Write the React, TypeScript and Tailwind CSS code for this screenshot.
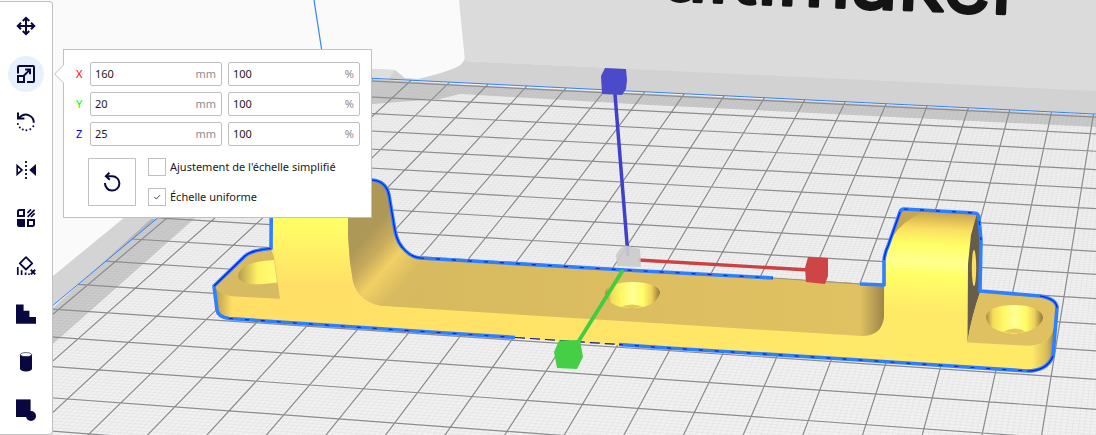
import { useState } from 'react';
import type { ReactNode } from 'react';
import { clsx } from 'clsx';

interface Tool {
  id: string;
  label: string;
  icon: ReactNode;
}

interface Axis {
  id: 'x' | 'y' | 'z';
  label: string;
  color: string;
}

const AXES: Axis[] = [
  { id: 'x', label: 'X', color: 'text-[#ff0000]' },
  { id: 'y', label: 'Y', color: 'text-[#00ff00]' },
  { id: 'z', label: 'Z', color: 'text-[#0000ff]' },
];

const TOOLS: Tool[] = [
  {
    id: 'move',
    label: 'Déplacer',
    icon: (
      <g fill="none" stroke="currentColor" strokeWidth="2">
        <path d="M10 2v16M2 10h16" />
        <path d="M6.8 5 10 1.8 13.2 5M6.8 15l3.2 3.2 3.2-3.2M5 6.8 1.8 10 5 13.2M15 6.8l3.2 3.2-3.2 3.2" />
      </g>
    ),
  },
  {
    id: 'scale',
    label: 'Mise à l’échelle',
    icon: (
      <g fill="none" stroke="currentColor" strokeWidth="2">
        <path d="M2 9.5V3a1 1 0 0 1 1-1h14a1 1 0 0 1 1 1v14a1 1 0 0 1-1 1h-6" />
        <path d="M2 12h6v6H2zM7.5 12 14 5.6M9.2 5.5H14v4.8" />
      </g>
    ),
  },
  {
    id: 'rotate',
    label: 'Tourner',
    icon: (
      <>
        <path d="M3 6.2C6 2.8 10 2 13 3.4c3 1.3 4.8 4 4.8 7.3" fill="none" stroke="currentColor" strokeWidth="2" />
        <path d="M2 .5v6h6.4" fill="none" stroke="currentColor" strokeWidth="2" />
        <g fill="currentColor">
          <circle cx="1.9" cy="12" r="1" />
          <circle cx="3.8" cy="15.4" r="1" />
          <circle cx="6.8" cy="17.4" r="1" />
          <circle cx="10.4" cy="18.3" r="1" />
          <circle cx="14.3" cy="17.3" r="1" />
          <circle cx="17.3" cy="14.2" r="1" />
        </g>
      </>
    ),
  },
  {
    id: 'mirror',
    label: 'Miroir',
    icon: (
      <>
        <path d="M1.2 5.6v8.8L6 10z" fill="none" stroke="currentColor" strokeWidth="1.7" />
        <path d="M20 4v12l-6.8-6z" fill="currentColor" />
        <path d="M10 1v18" fill="none" stroke="currentColor" strokeWidth="1.8" strokeDasharray="2 2" />
      </>
    ),
  },
  {
    id: 'mesh',
    label: 'Paramètres par modèle',
    icon: (
      <>
        <path d="M2 3.4Q2 2 3.4 2H8v6H2zM12 12h6v4.6q0 1.4-1.4 1.4H12z" fill="none" stroke="currentColor" strokeWidth="2" />
        <path d="M1 11h8v8H3q-2 0-2-2z" fill="currentColor" />
        <path d="M11.4 5 15 1.4M11.6 8.8l7-7M15 9l3.6-3.6" fill="none" stroke="currentColor" strokeWidth="1.7" />
      </>
    ),
  },
  {
    id: 'blocker',
    label: 'Bloqueur des supports',
    icon: (
      <g fill="none" stroke="currentColor">
        <path d="m10 1.2 6.2 6.1-6.2 6.2-6.2-6.2z" strokeWidth="1.8" strokeLinejoin="round" />
        <path d="M1.8 11v8M5.6 14.2V19M9.6 16.4V19M13 17.4V19" strokeWidth="1.7" />
        <path d="m14.8 13.8 4.4 4.6M19.2 13.8l-4.4 4.6" strokeWidth="2" />
      </g>
    ),
  },
  {
    id: 'stairs',
    label: 'Découpe en escalier',
    icon: <path d="M0 .4h7.6v6.3h5.8V13H20v6.7H0z" fill="currentColor" />,
  },
  {
    id: 'cylinder',
    label: 'Support cylindrique',
    icon: (
      <>
        <path d="M4 2.6v14q0 2.8 6 2.8t6-2.8v-14z" fill="currentColor" />
        <ellipse cx="10" cy="2.6" rx="5.7" ry="2" fill="#fff" stroke="currentColor" strokeWidth=".6" />
      </>
    ),
  },
  {
    id: 'shape',
    label: 'Forme personnalisée',
    icon: (
      <>
        <path d="M0-.6h14.6V17H0z" fill="currentColor" />
        <circle cx="15" cy="16" r="5" fill="currentColor" />
      </>
    ),
  },
];

// Perspective of the build plate: grid cell (i, j) to scene coordinates
function project(i: number, j: number) {
  const w = 1 - 0.002746 * i - 0.0201 * j;
  const x = (38.05 * i - 24.52 * j + 682.5) / w;
  const y = (1.72 * i + 13.46 * j + 96.5) / w;
  return `${x.toFixed(1)} ${y.toFixed(1)}`;
}

const MIN_I = -9.2;
const MAX_I = 20;
const MIN_J = -0.18;
const MAX_J = 18;

function gridPath(step: number) {
  const parts: string[] = [];
  for (let n = 0; n <= (MAX_I + 9) / step; n++) {
    const i = -9 + n * step;
    parts.push(`M${project(i, MIN_J)}L${project(i, MAX_J)}`);
  }
  for (let n = 0; n <= MAX_J / step; n++) {
    parts.push(`M${project(MIN_I, n * step)}L${project(MAX_I, n * step)}`);
  }
  return parts.join('');
}

const MAJOR_GRID = gridPath(1);
const MINOR_GRID = gridPath(0.1);
const PLATE = `M${project(MIN_I, MIN_J)}L${project(MAX_I, MIN_J)}L${project(MAX_I, MAX_J)}L${project(MIN_I, MAX_J)}Z`;
const PLATE_EDGE = `M${project(MIN_I, MAX_J)}L${project(MIN_I, MIN_J)}L${project(MAX_I, MIN_J)}`;

const BODY =
  'M214 286 245 256Q252 250 271 248.500L271.500 180H372Q386 181 389 195L394 225Q396 240 402 247 410 257 420 258L625 270 773 278 860 284 883 285 884 260Q885 252 888 246L900 212Q901 209 904 209L974 213Q979 213 979 219L981 240 980 291 1040 296Q1057 299 1057 308L1053 356Q1047 371 1027 371L860 360 660 348 430 332 229 318.500Q218 317 217 310Z';

function Scene() {
  return (
    <svg
      className="absolute inset-0 size-full"
      viewBox="0 0 1096 435"
      preserveAspectRatio="xMinYMin slice"
      role="img"
      aria-label="Plateau d’impression"
    >
      <defs>
        <linearGradient id="front" gradientUnits="userSpaceOnUse" x1="214" x2="900" y1="0" y2="0">
          <stop offset="0" stopColor="#ffde66" />
          <stop offset="1" stopColor="#ffea68" />
        </linearGradient>
        <linearGradient id="floor" gradientUnits="userSpaceOnUse" x1="400" x2="884" y1="0" y2="0">
          <stop offset="0" stopColor="#d7b95f" />
          <stop offset=".95" stopColor="#e1c262" />
          <stop offset="1" stopColor="#9b8549" />
        </linearGradient>
        <linearGradient id="fillet" gradientUnits="userSpaceOnUse" x1="358" y1="246" x2="402" y2="285">
          <stop offset="0" stopColor="#ae9857" />
          <stop offset=".3" stopColor="#c8ab5c" />
          <stop offset=".6" stopColor="#f1d064" />
          <stop offset="1" stopColor="#d8ba60" />
        </linearGradient>
        <linearGradient id="earLeft" gradientUnits="userSpaceOnUse" x1="0" x2="0" y1="217" y2="285">
          <stop offset="0" stopColor="#ffff66" />
          <stop offset=".2" stopColor="#fffb66" />
          <stop offset="1" stopColor="#ffdf66" />
        </linearGradient>
        <linearGradient id="earRight" gradientUnits="userSpaceOnUse" x1="930" x2="925" y1="213" y2="312">
          <stop offset="0" stopColor="#cda850" />
          <stop offset=".16" stopColor="#fadf60" />
          <stop offset=".32" stopColor="#ffff66" />
          <stop offset=".5" stopColor="#ffff90" />
          <stop offset=".62" stopColor="#ffff66" />
          <stop offset="1" stopColor="#ffea68" />
        </linearGradient>
        <linearGradient id="cornerLeft">
          <stop offset="0" stopColor="#b3964e" />
          <stop offset="1" stopColor="#ffde66" />
        </linearGradient>
        <linearGradient id="cornerRight">
          <stop offset="0" stopColor="#ffea68" />
          <stop offset=".6" stopColor="#d9ba5a" />
          <stop offset="1" stopColor="#84733f" />
        </linearGradient>
        <linearGradient id="hole">
          <stop offset="0" stopColor="#a08642" />
          <stop offset=".05" stopColor="#c9ab4b" />
          <stop offset=".12" stopColor="#f3dc5a" />
          <stop offset=".3" stopColor="#fff864" />
          <stop offset=".5" stopColor="#ffff96" />
          <stop offset=".7" stopColor="#fffb66" />
          <stop offset=".85" stopColor="#ebd158" />
          <stop offset=".93" stopColor="#bb9e4a" />
          <stop offset="1" stopColor="#8c773d" />
        </linearGradient>
        <linearGradient id="holeLeft">
          <stop offset="0" stopColor="#b59a4f" />
          <stop offset=".5" stopColor="#fff164" />
          <stop offset="1" stopColor="#ffff74" />
        </linearGradient>
      </defs>

      {/* back wall and printer body */}
      <rect width="1096" height="435" fill="#fafafa" />
      <path d="M459 0H1096V92L465 61Z" fill="#dbdbdb" />
      <path d="M465 61 1096 91V125L372 84V69L395 70 405 78 418 79Q440 74 455 68 463 65 465 58Z" fill="#d2d2d2" />
      <path d="M372 69 395 70 388 80 372 79Z" fill="#dedede" />
      <text
        x="658"
        y="0"
        fill="#141414"
        stroke="#141414"
        strokeWidth="3"
        strokeLinejoin="round"
        className="font-['Inter',sans-serif] text-[84px] font-normal"
        transform="rotate(2.300 658 0)"
      >
        ultimaker
      </text>
      <path d="M125 217 53 276V345L200 217Z" fill="#d4d4d4" />

      {/* build plate */}
      <path d={PLATE} fill="#f1f1f1" />
      <path d={MINOR_GRID} fill="none" stroke="#d8d8d8" strokeWidth=".5" opacity=".7" />
      <g fill="#000" opacity=".15">
        <path d="M151 219 195 218 53 344V308Z" />
        <path d="M334 77 372 79 467 85 1096 115V127L650 105 460 94 440 99 372 104 334 102Z" />
      </g>
      <path d={MAJOR_GRID} fill="none" stroke="#8b8c8e" strokeWidth="1.200" />
      <path d={PLATE_EDGE} fill="none" stroke="#3282ff" strokeWidth="1" />
      <path d="M314 0 322 52" stroke="#3282ff" strokeWidth="1.200" />

      {/* model */}
      <path d={BODY} fill="url(#front)" />
      <path d="M214 286 245 256Q252 250 271 248.500L274 258 280 298.700 226 296Q218 294 214 286Z" fill="#d7ba62" />
      <path d="M214 286Q218 294 232 296.300V318.500Q218 317 217 310Z" fill="url(#cornerLeft)" />
      <path d="M274 260Q238 262 238 277 242 288 277 282.500Z" fill="url(#holeLeft)" />
      <path d="M272 180H348V235L350 262Q352 287 362 295L281 298Q274 255 272 235Z" fill="url(#earLeft)" />
      <path
        d="M348 180H372Q386 181 389 195L394 225Q396 240 402 247 410 257 420 258L625 270 773 278 884 285V317Q882 336 862 336L670 324 430 309 380 305.500Q358 301 353 281L350 262 348 235Z"
        fill="url(#floor)"
      />
      <path
        d="M348 180H372Q386 181 389 195L394 225Q396 240 402 247 410 257 420 258L440 259.500 400 306.800 380 305.500Q358 301 353 281L350 262 348 235Z"
        fill="url(#fillet)"
      />
      <path d="M885 262 888 246 900 212Q901 209 904 209L977 213 971 235 968 264V312H885Z" fill="url(#earRight)" />
      <path d="M902 210 921 213Q903 221 893 236Z" fill="#c8a650" />
      <path d="M977 213 980 220 981 240 980 293Q972 315 967.500 342L968 264 971 235Z" fill="#675d4b" />
      <ellipse cx="974" cy="268" rx="2.200" ry="18" fill="#f8e05c" />
      <path d="M980 292 1040 297Q1056 299 1057 308L1054 328Q1050 346 1027 345.700L967 342.500Q972 315 980 292Z" fill="#e0c162" />
      <path d="M1032 345.600Q1051 344 1054 327L1057 308 1053 356Q1047 370 1032 371Z" fill="url(#cornerRight)" />
      <path d="M605 293C606 286 617 282 632 282 648 282 660 286 660 293 658 301 650 305 645 306.500 638 308.500 626 308.500 619 306.500 611 304 606 300 605 293Z" fill="url(#hole)" />
      <path d="M621 307Q632 302 643 307 632 309 621 307Z" fill="#e6c659" />
      <path d="M986 317C987 309 999 305 1014 305 1030 305 1043 310 1043 318 1042 325 1033 330 1027 331.500 1019 334 1008 334 1001 331.500 993 329 987 325 986 317Z" fill="url(#hole)" />
      <path d="M1003 332Q1014 325 1026 332 1014 334 1003 332Z" fill="#e6c659" />

      {/* selection outline, broken where the plate hides it */}
      <g fill="none" stroke="#2f80ff" strokeWidth="3.600" strokeLinejoin="round">
        <path d="M515 337.500 430 332 229 318.500Q218 317 217 310L214 286 245 256Q252 250 271 248.500L271.500 180H372Q386 181 389 195L394 225Q396 240 402 247 410 257 420 258L625 270 773 278" />
        <path d="M860 284 884 285 884 260Q885 252 888 246L900 212Q901 209 904 209L974 213Q979 213 979 219L981 240 980 291 1040 296Q1057 299 1057 308L1053 356Q1047 371 1027 371L860 360 660 347.500 619 344.500" />
      </g>
      <g fill="none" stroke="#0a1ee0" strokeWidth="1.200">
        <path d="M214 286 245 256Q252 250 271 248.500M372 180Q386 181 389 195L394 225Q396 240 402 247 410 257 420 258M1040 296Q1057 299 1057 308M1053 356Q1047 371 1027 371M884 260Q885 252 888 246L900 212" />
        <path d="M420 258 625 270 773 278M229 318.500 430 332 515 337.500M619 344.500 660 347.500 860 360 1027 371M904 209 974 213 979 219 981 240" strokeDasharray="4 12" />
      </g>
      <path d="M515 337.500 619 344.500" fill="none" stroke="#0a1680" strokeWidth="1.200" strokeDasharray="10 5" />
      <path d="M773 278 860 284" fill="none" stroke="#9a917a" strokeWidth="1" />

      {/* scale handles */}
      <path d="M614 82 628 256" stroke="#4040c8" strokeWidth="3.500" />
      <path d="M605 68 626 69 627 80 626 89 622 95 602 94 601 76Z" fill="#4a4acb" />
      <path d="M638 260 818 270.500" stroke="#cc4141" strokeWidth="3.300" />
      <path d="M808 257 828 258V276L825 284 806 282 805 268Z" fill="#cd4545" />
      <path d="M623 270 570 355" stroke="#42cc42" strokeWidth="3.800" />
      <path d="M559 340.500 580 340 583 357 577 369 557 368 554 352Z" fill="#47ce47" />
      <path d="M620 249 626 245.500 640 249 641 267 617 266 616 255Z" fill="#cbcbcb" opacity=".93" />
    </svg>
  );
}

interface FieldProps {
  label: string;
  unit: string;
  value: string;
  onChange: (value: string) => void;
}

function Field({ label, unit, value, onChange }: FieldProps) {
  return (
    <label className="flex h-6 w-[132px] items-center rounded-xs border border-[#c0c0c0] bg-white pr-[5px] pl-1">
      <input
        type="text"
        aria-label={label}
        value={value}
        onChange={(e) => onChange(e.target.value)}
        className="min-w-0 flex-1 bg-transparent text-[#191919] outline-none"
      />
      <span className="text-[#8c8c8c]">{unit}</span>
    </label>
  );
}

interface CheckFieldProps {
  id: string;
  label: string;
  checked: boolean;
  onChange: (checked: boolean) => void;
}

function CheckField({ id, label, checked, onChange }: CheckFieldProps) {
  return (
    <div className="flex h-[18px] items-center gap-1">
      <span className="grid size-[18px] place-items-center">
        <input
          id={id}
          type="checkbox"
          checked={checked}
          onChange={(e) => onChange(e.target.checked)}
          className="col-start-1 row-start-1 size-[18px] appearance-none border border-[#c0c0c0] bg-white"
        />
        {checked && (
          <svg className="pointer-events-none col-start-1 row-start-1 size-2" viewBox="0 0 8 8" aria-hidden="true">
            <path d="m1.300 4 2 2 3.700-3.800" fill="none" stroke="#444" strokeWidth="1" />
          </svg>
        )}
      </span>
      <label htmlFor={id} className="text-[#191919]">
        {label}
      </label>
    </div>
  );
}

const INITIAL_SIZE = { x: '160', y: '20', z: '25' };
const INITIAL_PERCENT = { x: '100', y: '100', z: '100' };

function ScalePanel() {
  const [size, setSize] = useState(INITIAL_SIZE);
  const [percent, setPercent] = useState(INITIAL_PERCENT);
  const [snap, setSnap] = useState(false);
  const [uniform, setUniform] = useState(true);

  const handleReset = () => {
    setSize(INITIAL_SIZE);
    setPercent(INITIAL_PERCENT);
  };

  return (
    <section className="relative mt-[49px] ml-2.5 border border-[#c0c0c0] bg-white pt-3 pr-[11px] pb-[11px] pl-3">
      <svg className="absolute top-3.5 -left-2.5 h-5 w-2.5" viewBox="0 0 10 20" aria-hidden="true">
        <path d="M10 .5.700 10 10 19.500" fill="#fff" stroke="#c0c0c0" />
      </svg>
      <div className="flex flex-col gap-1.5">
        {AXES.map((axis) => (
          <div key={axis.id} className="flex items-center">
            <span className={clsx('w-3.5', axis.color)}>{axis.label}</span>
            <div className="flex gap-1.5">
              <Field
                label={`${axis.label} mm`}
                unit="mm"
                value={size[axis.id]}
                onChange={(value) => setSize({ ...size, [axis.id]: value })}
              />
              <Field
                label={`${axis.label} %`}
                unit="%"
                value={percent[axis.id]}
                onChange={(value) => setPercent({ ...percent, [axis.id]: value })}
              />
            </div>
          </div>
        ))}
      </div>
      <div className="mt-3 ml-3 flex gap-3">
        <button
          type="button"
          aria-label="Réinitialiser"
          onClick={handleReset}
          className="grid size-12 place-items-center border border-[#c0c0c0] bg-white text-[#08073f]"
        >
          <svg className="size-5" viewBox="0 0 20 20" fill="none" stroke="currentColor" strokeWidth="2" aria-hidden="true">
            <path d="M3 11a7.200 7.200 0 1 0 7.200-6.800H4" />
            <path d="M7.400.8 3.900 4.200 7.800 7.800" />
          </svg>
        </button>
        <div className="flex flex-col gap-3">
          <CheckField id="snap" label="Ajustement de l'échelle simplifié" checked={snap} onChange={setSnap} />
          <CheckField id="uniform" label="Échelle uniforme" checked={uniform} onChange={setUniform} />
        </div>
      </div>
    </section>
  );
}

export default function App() {
  const [active, setActive] = useState('scale');

  return (
    <main className="relative min-h-screen overflow-hidden font-['Noto_Sans',sans-serif] text-[11px] leading-4">
      <Scene />
      <div className="relative flex items-start">
        <nav className="mt-px w-[53px] rounded-r border-y border-r border-[#c0c0c0] bg-white">
          {TOOLS.map((tool) => (
            <button
              key={tool.id}
              type="button"
              aria-label={tool.label}
              aria-pressed={active === tool.id}
              onClick={() => setActive(tool.id)}
              className="grid h-12 w-full place-items-center text-[#08073f]"
            >
              <span className={clsx('grid size-9 place-items-center rounded-full', active === tool.id && 'bg-[#e6f1fd]')}>
                <svg className="size-5 overflow-visible" viewBox="0 0 20 20" aria-hidden="true">
                  {tool.icon}
                </svg>
              </span>
            </button>
          ))}
        </nav>
        <ScalePanel />
      </div>
    </main>
  );
}
